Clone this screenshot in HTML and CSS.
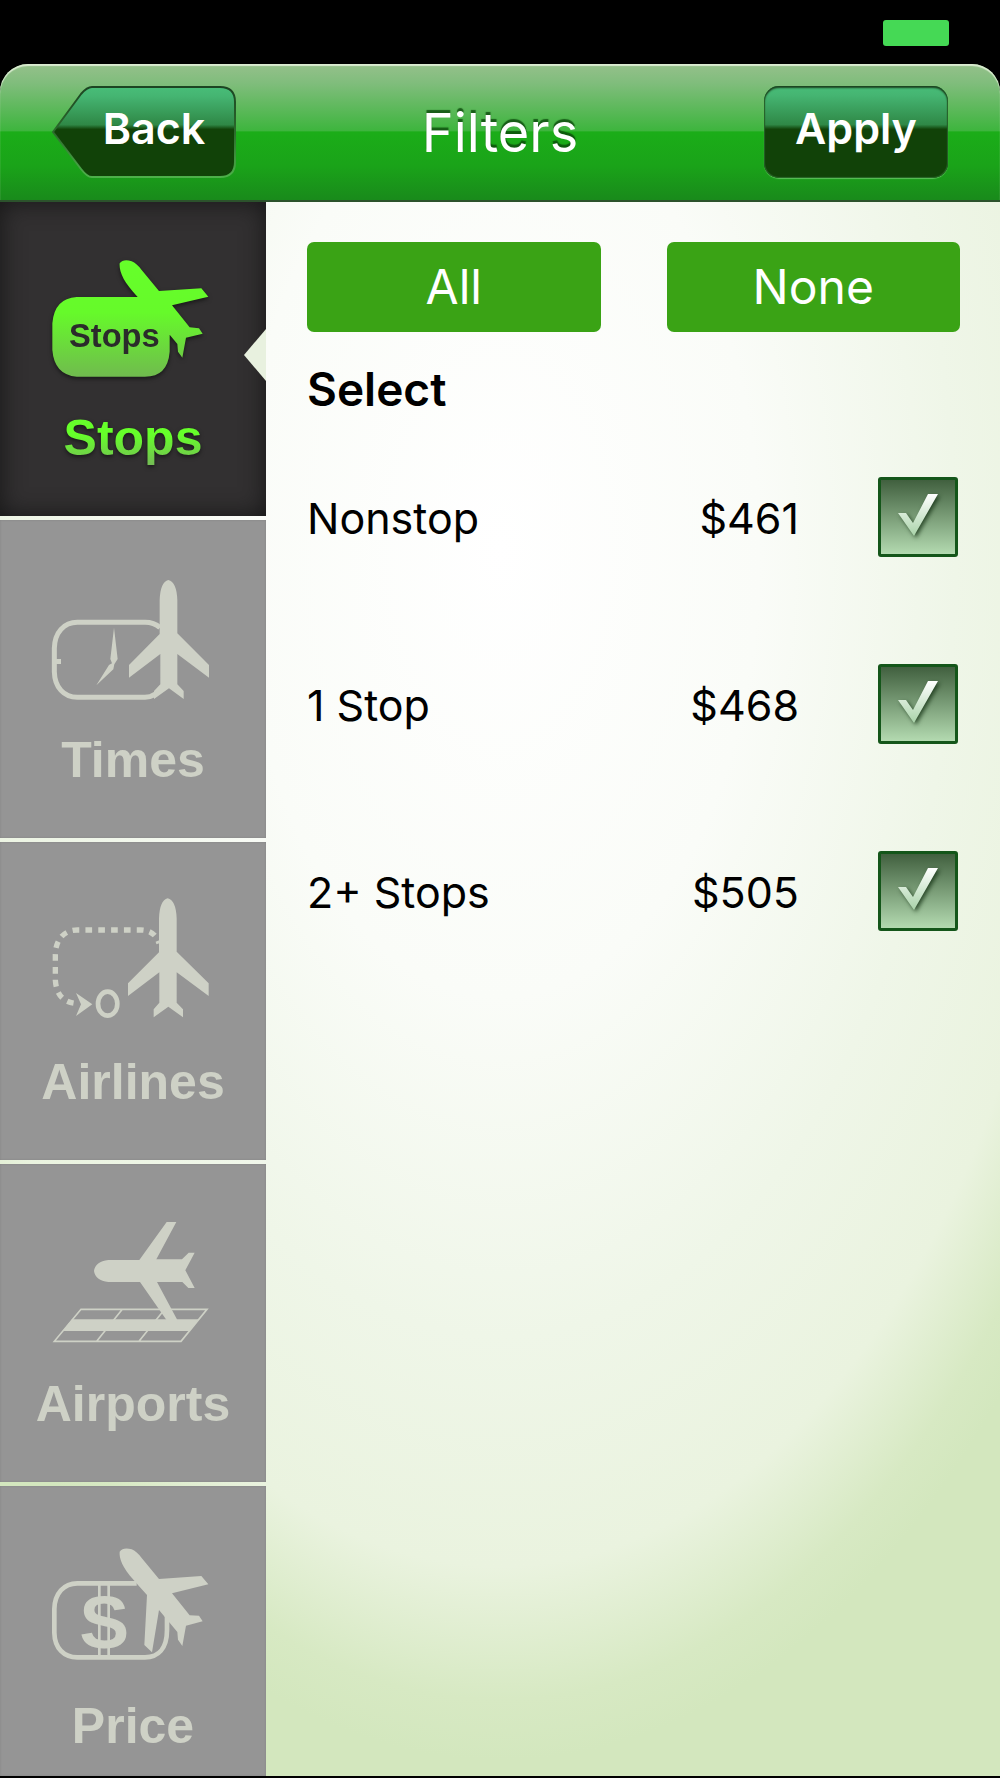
FILE: index.html
```html
<!DOCTYPE html>
<html lang="en">
<head>
<meta charset="utf-8">
<meta name="viewport" content="width=device-width, initial-scale=1">
<title>Filters</title>
<link rel="stylesheet" href="styles.css">
</head>
<body>
<div class="status-bar"><span class="battery"></span></div>

<header class="nav-bar">
  <button class="nav-button back" type="button">
    <svg class="back-shape" viewBox="0 0 184 92" aria-hidden="true">
      <defs>
        <linearGradient id="glass" x1="0" y1="0" x2="0" y2="1">
          <stop offset="0" stop-color="#48bd78"/>
          <stop offset=".1" stop-color="#45b572"/>
          <stop offset=".42" stop-color="#2f8846"/>
          <stop offset=".47" stop-color="#114208"/>
          <stop offset="1" stop-color="#114208"/>
        </linearGradient>
        <linearGradient id="rim" x1="0" y1="0" x2="0" y2="1">
          <stop offset="0" stop-color="#1c4422"/>
          <stop offset=".5" stop-color="#2c6a2c"/>
          <stop offset="1" stop-color="#4db04a"/>
        </linearGradient>
      </defs>
      <path d="M1 46 L29 8 Q35 1 40 1 H168 Q183 1 183 16 V76 Q183 91 168 91 H40 Q35 91 29 83 Z" fill="url(#glass)" stroke="url(#rim)" stroke-width="2"/>
    </svg>
    <span>Back</span>
  </button>
  <h1 class="title">Filters</h1>
  <button class="nav-button apply" type="button">Apply</button>
</header>

<div class="content">
  <nav class="tabs">
    <a class="tab active" href="#stops">
      <svg class="icon" viewBox="153 162 492 378" aria-hidden="true">
        <defs>
          <linearGradient id="lime" gradientUnits="userSpaceOnUse" x1="0" y1="180" x2="0" y2="530">
            <stop offset="0" stop-color="#66ff2a"/>
            <stop offset=".45" stop-color="#66fa2a"/>
            <stop offset="1" stop-color="#70bb4e"/>
          </linearGradient>
        </defs>
        <g fill="url(#lime)">
          <path d="M230 291 H413 C370 245 357 215 359 190 Q370 176 395 184 Q410 190 425 210 L477 273 L604 265 L625 290 L516 316 L569 382 L597 385 L608 401 L558 413 L547 473 L534 455 L532 432 L509 404 V455 Q503 530 435 530 H230 Q163 525 157 450 V370 Q163 295 230 291 Z"/>
        </g>
        <text class="icon-text" x="343" y="442" text-anchor="middle" font-size="98">Stops</text>
      </svg>
      <span class="tab-label">Stops</span>
    </a>
    <a class="tab" href="#times">
      <svg class="icon" viewBox="153 198 492 378" aria-hidden="true">
        <path d="M480 353 Q462 337 435 337 H232 C192 337 164 368 163 415 V485 C164 532 192 562 232 562 H435 Q468 560 486 530" fill="none" stroke="currentColor" stroke-width="15"/>
        <path d="M168 447 H183 V462 H168 Z M342 353 L353 447 L343 463 L340 478 L289 526 L327 465 L336 460 L331 447 Z"/>
        <path d="M479 270 Q481 216 505 210 Q530 216 532 270 V370 L627 465 V503 L532 432 V523 L551 543 V567 L507 535 L462 567 V543 L481 523 V432 L387 503 V465 L479 372 Z"/>
      </svg>
      <span class="tab-label">Times</span>
    </a>
    <a class="tab" href="#airlines">
      <svg class="icon" viewBox="153 204 492 378" aria-hidden="true">
        <path d="M477 340 Q464 300 422 300 H232 C190 300 166 332 166 375 V450 Q170 514 226 520" fill="none" stroke="currentColor" stroke-width="16" stroke-dasharray="20 18.5" stroke-dashoffset="12"/>
        <path d="M228 489 L277 523 L228 558 L243 523 Z"/>
        <ellipse cx="323" cy="521" rx="29" ry="36" fill="none" stroke="currentColor" stroke-width="14"/>
        <path d="M477 265 Q479 211 503 205 Q528 211 530 265 V365 L626 460 V498 L530 427 V518 L549 538 V562 L505 530 L461 562 V538 L478 518 V427 L384 498 V460 L477 367 Z"/>
      </svg>
      <span class="tab-label">Airlines</span>
    </a>
    <a class="tab" href="#airports">
      <svg class="icon" viewBox="153 210 492 378" aria-hidden="true">
        <path d="M243 478 H621 L543 574 H163 Z M367 478 L290 574 M494 478 L417 574" fill="none" stroke="currentColor" stroke-width="5"/>
        <path d="M216 508 H597 L568 543 H188 Z"/>
        <path d="M282 363 Q286 334 325 330 H418 L500 216 H529 L469 328 H546 L566 308 H584 L556 361 L584 414 H565 L547 396 H471 L534 514 H502 L420 396 H325 Q286 392 282 363 Z"/>
      </svg>
      <span class="tab-label">Airports</span>
    </a>
    <a class="tab" href="#price">
      <svg class="icon" viewBox="153 216 492 378" aria-hidden="true">
        <path d="M410 340 H232 C192 340 164 370 163 417 V488 C164 535 192 562 232 562 H435 C475 562 501 535 501 480 V430" fill="none" stroke="currentColor" stroke-width="14"/>
        <text x="313" y="534" text-anchor="middle" font-size="225">S</text>
        <path d="M294 345 H302 V555 H294 Z M322 345 H330 V555 H322 Z"/>
        <path d="M401 330 C367 292 357 265 359 245 Q370 230 395 238 Q410 244 425 264 L477 327 L604 318 L625 343 L516 370 L569 436 L597 437 L608 454 L558 467 L547 528 L534 509 L532 486 L477 420 L456 547 L433 525 L441 375 L416 347 Z"/>
      </svg>
      <span class="tab-label">Price</span>
    </a>
  </nav>

  <main class="panel">
    <div class="actions">
      <button class="action" type="button">All</button>
      <button class="action" type="button">None</button>
    </div>
    <h2 class="heading">Select</h2>
    <div class="options">
      <label class="option">
        <span class="name">Nonstop</span>
        <span class="price">$461</span>
        <span class="check">
          <input type="checkbox" checked>
          <svg viewBox="0 0 80 80" aria-hidden="true">
            <defs>
              <linearGradient id="tick" x1="0" y1="0" x2="0" y2="1">
                <stop offset="0" stop-color="#fff"/>
                <stop offset="1" stop-color="#a9d3a9"/>
              </linearGradient>
            </defs>
            <path d="M20 36 H28 L35 46 L50 17 H60 L36 59 Z" fill="url(#tick)"/>
          </svg>
        </span>
      </label>
      <label class="option">
        <span class="name">1 Stop</span>
        <span class="price">$468</span>
        <span class="check">
          <input type="checkbox" checked>
          <svg viewBox="0 0 80 80" aria-hidden="true"><path d="M20 36 H28 L35 46 L50 17 H60 L36 59 Z" fill="url(#tick)"/></svg>
        </span>
      </label>
      <label class="option">
        <span class="name">2+ Stops</span>
        <span class="price">$505</span>
        <span class="check">
          <input type="checkbox" checked>
          <svg viewBox="0 0 80 80" aria-hidden="true"><path d="M20 36 H28 L35 46 L50 17 H60 L36 59 Z" fill="url(#tick)"/></svg>
        </span>
      </label>
    </div>
  </main>
</div>
</body>
</html>
```

FILE: styles.css
```css
* {
  box-sizing: border-box;
}

body {
  margin: 0;
  min-height: 100vh;
  display: flex;
  flex-direction: column;
  padding-bottom: 2px;
  background: #000;
  color: #000;
  font-family: Inter, "Liberation Sans", sans-serif;
}

button {
  border: 0;
  padding: 0;
  background: none;
  color: #fff;
  font-family: inherit;
}

/* Status bar */
.status-bar {
  display: flex;
  justify-content: flex-end;
  height: 64px;
  padding: 20px 51px 0 0;
}

.battery {
  width: 66px;
  height: 26px;
  border-radius: 3px;
  background: #45d955;
}

/* Navigation bar */
.nav-bar {
  display: grid;
  grid-template-columns: 184px 1fr 184px;
  align-items: start;
  height: 138px;
  padding: 22px 52px 0;
  border-radius: 28px 28px 0 0;
  border-bottom: 2px solid #2c522c;
  background: linear-gradient(#95c08b 0%, #80bd7c 14%, #3eb53e 49%, #1bad18 50%, #1aa319 75%, #198a1b 100%);
  box-shadow: inset 0 2px 1px rgba(225, 240, 215, .9);
}

.nav-button {
  height: 92px;
  padding-bottom: 8px;
  font-size: 43px;
  font-weight: 600;
  line-height: 50px;
}

.back {
  display: grid;
  align-items: center;
  justify-items: center;
}

.back > * {
  grid-area: 1 / 1;
}

.back span {
  padding-left: 20px;
}

.back-shape {
  width: 184px;
  height: 92px;
  margin-bottom: -8px;
}

.apply {
  border-radius: 15px;
  background: linear-gradient(#48bd78 0%, #45b572 10%, #2f8846 42%, #114208 47%, #114208 100%);
  box-shadow: inset 0 2px 2px #1c4422, inset 0 0 1px 1px #2c6a2c, 0 1px 1px #5cc05a;
}

.title {
  margin: 15px 0 0;
  color: #fff;
  font-size: 54px;
  font-weight: 400;
  line-height: 64px;
  text-align: center;
  text-shadow: 0 -3px 1px rgba(10, 70, 10, .8);
}

/* Body */
.content {
  flex: 1;
  display: flex;
  background: radial-gradient(ellipse 70% 77% at 50% 22%, #fff 0%, #fafcf8 37%, #eff6e8 65%, #eaf3df 84%, #d7e9c3 95%, #d3e7be 100%);
}

.tabs {
  display: flex;
  flex: none;
  flex-direction: column;
  gap: 4px;
  width: 266px;
}

.tab {
  display: flex;
  flex-direction: column;
  align-items: center;
  min-height: 318px;
  padding-top: 56px;
  background: #959595;
  box-shadow: inset 0 0 2px #7f7f7f;
  color: #ced1c6;
  text-decoration: none;
}

.tab:last-child {
  flex: 1;
  min-height: 290px;
}

.tab.active {
  position: relative;
  min-height: 314px;
  padding-top: 52px;
  background: #323031;
  box-shadow: inset 0 0 24px #161616;
}

.tab.active::after {
  content: "";
  position: absolute;
  top: 127px;
  right: 0;
  width: 22px;
  height: 52px;
  background: #e8f1df;
  clip-path: polygon(100% 0, 100% 100%, 0 50%);
}

.icon {
  width: 164px;
  height: 126px;
  overflow: visible;
  fill: currentColor;
  font-family: "Liberation Sans", Arial, sans-serif;
  font-weight: 700;
}

.active .icon {
  filter: drop-shadow(0 2px 2px #181818);
}

.icon-text {
  fill: #2b2b2b;
}

.tab-label {
  margin-top: 24px;
  font-family: "Liberation Sans", Arial, sans-serif;
  font-size: 50px;
  font-weight: 700;
  line-height: 68px;
}

.active .tab-label {
  background: linear-gradient(#66ff2a 45%, #74bb55 90%);
  -webkit-background-clip: text;
  background-clip: text;
  color: transparent;
  filter: drop-shadow(0 2px 2px #181818);
}

.panel {
  flex: 1;
  padding: 40px 40px 40px 41px;
}

.actions {
  display: grid;
  grid-template-columns: 1fr 1fr;
  gap: 66px;
}

.action {
  height: 90px;
  border-radius: 7px;
  background: #3aa315;
  font-size: 48px;
  line-height: 56px;
}

.heading {
  margin: 30px 0 0;
  font-size: 46px;
  font-weight: 600;
  line-height: 54px;
}

.options {
  display: grid;
  gap: 107px;
  margin-top: 61px;
}

.option {
  display: grid;
  grid-template-columns: 1fr auto 80px;
  column-gap: 79px;
  align-items: center;
  padding-right: 2px;
  font-size: 43px;
  line-height: 50px;
}

.name,
.price {
  padding-top: 2px;
}

.check {
  display: grid;
}

.check > * {
  grid-area: 1 / 1;
  width: 80px;
  height: 80px;
  margin: 0;
}

.check input {
  appearance: none;
  border: 3px solid #14561a;
  border-radius: 3px;
  background: linear-gradient(#41603f, #b3dab0);
}

.check svg {
  visibility: hidden;
  pointer-events: none;
  filter: drop-shadow(2px 2px 2px rgba(20, 50, 20, .8));
}

.check input:checked + svg {
  visibility: visible;
}
```
